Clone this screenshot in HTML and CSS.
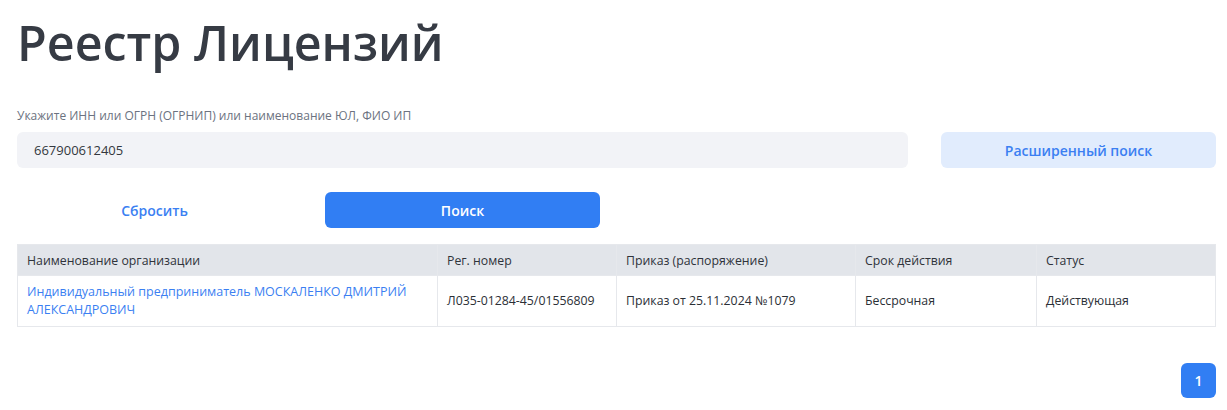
FILE: index.html
```html
<!DOCTYPE html>
<html lang="ru">
<head>
<meta charset="utf-8">
<title>Реестр Лицензий</title>
<link rel="stylesheet" href="styles.css">
</head>
<body>
<main class="page">
  <h1 class="title">Реестр Лицензий</h1>
  <form class="search">
    <label class="search__label" for="q">Укажите ИНН или ОГРН (ОГРНИП) или наименование ЮЛ, ФИО ИП</label>
    <div class="search__grid">
      <input id="q" class="search__input" type="text" value="667900612405">
      <button type="button" class="btn btn--light">Расширенный поиск</button>
      <button type="button" class="btn btn--link">Сбросить</button>
      <button type="button" class="btn btn--primary">Поиск</button>
    </div>
  </form>
  <table class="results">
    <colgroup>
      <col class="c1"><col class="c2"><col class="c3"><col class="c4"><col class="c5">
    </colgroup>
    <thead>
      <tr>
        <th>Наименование организации</th>
        <th>Рег. номер</th>
        <th>Приказ (распоряжение)</th>
        <th>Срок действия</th>
        <th>Статус</th>
      </tr>
    </thead>
    <tbody>
      <tr>
        <td><a class="org" href="#">Индивидуальный предприниматель МОСКАЛЕНКО ДМИТРИЙ АЛЕКСАНДРОВИЧ</a></td>
        <td>Л035-01284-45/01556809</td>
        <td>Приказ от 25.11.2024 №1079</td>
        <td>Бессрочная</td>
        <td>Действующая</td>
      </tr>
    </tbody>
  </table>
  <nav class="pager">
    <button type="button" class="pager__item pager__item--active">1</button>
  </nav>
</main>
</body>
</html>
```
FILE: styles.css
```css
html, body {
  margin: 0;
  padding: 0;
  background: #ffffff;
}
body {
  font-family: "Open Sans", "Noto Sans", sans-serif;
  color: #1f2937;
}
.page {
  padding: 0 11px 0 17px;
}
.title {
  margin: 0;
  padding-top: 8px;
  font-size: 48.4px;
  line-height: 68px;
  font-weight: 600;
  color: #363b44;
}
.search {
  margin-top: 32px;
}
.search__label {
  display: block;
  font-size: 12px;
  line-height: 16px;
  color: #6b7280;
  margin-bottom: 8px;
}
.search__grid {
  display: grid;
  grid-template-columns: repeat(4, 1fr);
  column-gap: 33px;
  row-gap: 24px;
}
.search__input {
  grid-column: span 3;
  height: 36px;
  box-sizing: border-box;
  border: none;
  border-radius: 6px;
  background: #f2f3f7;
  padding: 0 17px;
  font-family: inherit;
  font-size: 13px;
  color: #333840;
  outline: none;
}
.btn {
  height: 36px;
  border: none;
  border-radius: 6px;
  font-family: inherit;
  font-size: 14px;
  font-weight: 600;
  cursor: pointer;
}
.btn--light {
  background: #e1ecfd;
  color: #3b7ff2;
}
.btn--link {
  background: transparent;
  color: #3b7ff2;
}
.btn--primary {
  background: #317ef3;
  color: #ffffff;
}
.results {
  width: 100%;
  margin-top: 16px;
  border-collapse: collapse;
  table-layout: fixed;
  font-size: 12.3px;
  color: #2b2f36;
}
.c1 { width: 420px; }
.c2 { width: 179px; }
.c3 { width: 239px; }
.c4 { width: 181px; }
.results th,
.results td {
  border: 1px solid #e6e8ec;
  text-align: left;
  padding: 0 9px;
  vertical-align: middle;
}
.results th {
  background: #e2e5ea;
  font-weight: 400;
  height: 30px;
  color: #2f333a;
}
.results td {
  height: 50px;
  line-height: 18px;
}
.org {
  font-size: 12.5px;
  color: #3b7ff2;
  text-decoration: none;
}
.pager {
  display: flex;
  justify-content: flex-end;
  margin-top: 36px;
}
.pager__item {
  width: 35px;
  height: 35px;
  border: none;
  border-radius: 6px;
  font-family: inherit;
  font-size: 14px;
  font-weight: 600;
}
.pager__item--active {
  background: #317ef3;
  color: #ffffff;
}
```
